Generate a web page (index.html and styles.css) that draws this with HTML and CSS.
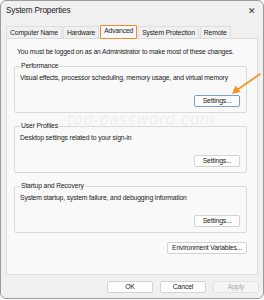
FILE: index.html
```html
<!DOCTYPE html>
<html lang="en">
<head>
    <meta charset="UTF-8">
    <title>System Properties</title>
    <link rel="stylesheet" href="styles.css">
</head>
<body>

    <!-- Dialog window -->
    <div class="window">
        <div class="titlebar">
            <span class="title">System Properties</span>
            <span class="close">&#x2715;</span>
        </div>

        <!-- Tabs -->
        <div class="tabs">
            <div class="tab">Computer Name</div>
            <div class="tab">Hardware</div>
            <div class="tab active">Advanced</div>
            <div class="tab">System Protection</div>
            <div class="tab">Remote</div>
        </div>

        <!-- Tab page -->
        <div class="panel">
            <p class="notice">You must be logged on as an Administrator to make most of these changes.</p>

            <fieldset class="group">
                <legend>Performance</legend>
                <p>Visual effects, processor scheduling, memory usage, and virtual memory</p>
                <div class="group-actions">
                    <button class="btn focused">Settings...</button>
                </div>
            </fieldset>

            <fieldset class="group">
                <legend>User Profiles</legend>
                <p>Desktop settings related to your sign-in</p>
                <div class="group-actions">
                    <button class="btn">Settings...</button>
                </div>
            </fieldset>

            <fieldset class="group">
                <legend>Startup and Recovery</legend>
                <p>System startup, system failure, and debugging information</p>
                <div class="group-actions">
                    <button class="btn">Settings...</button>
                </div>
            </fieldset>

            <div class="env-row">
                <button class="btn env">Environment Variables...</button>
            </div>

            <div class="watermark">top-password.com</div>
        </div>

        <!-- Dialog buttons -->
        <div class="footer">
            <button class="btn wide">OK</button>
            <button class="btn wide">Cancel</button>
            <button class="btn wide" disabled>Apply</button>
        </div>

        <!-- Orange pointer arrow -->
        <svg class="pointer" width="40" height="30" viewBox="0 0 40 30">
            <line x1="38" y1="4" x2="15" y2="20" stroke="#f39321" stroke-width="1.6" stroke-linecap="round"/>
            <polygon points="10,24 13.5,15.5 18.5,22" fill="#f39321"/>
        </svg>
    </div>

</body>
</html>
```

FILE: styles.css
```css
/* Reset */
body, html {
    margin: 0;
    padding: 0;
    background: #ffffff;
    font-family: 'Liberation Sans', Arial, sans-serif;
    color: #1a1a1a;
}

p {
    margin: 0;
}

/* Window frame */
.window {
    position: relative;
    width: 264px;
    height: 299px;
    box-sizing: border-box;
    border: 1px solid #9b9b9b;
    border-radius: 6px;
    background: #f0f0f0;
    overflow: hidden;
    letter-spacing: -0.15px;
}

/* Title bar */
.titlebar {
    height: 19px;
    display: flex;
    align-items: center;
    justify-content: space-between;
    padding: 0 7px 0 5px;
}

.title {
    font-size: 8.2px;
}

.close {
    font-size: 9px;
    color: #333;
}

/* Tabs */
.tabs {
    display: flex;
    margin: 6px 0 0 5px;
    height: 12px;
}

.tab {
    font-size: 6.8px;
    line-height: 11px;
    padding: 0 3px;
    border: 1px solid #dedede;
    border-bottom: none;
    background: #f0f0f0;
    color: #222;
    margin-right: 1px;
}

.tab.active {
    background: #f9f9f9;
    border: 1px solid #f08a24;
    border-radius: 1px;
    line-height: 10px;
    margin-top: -1px;
    height: 12px;
    position: relative;
    z-index: 1;
}

/* Tab page */
.panel {
    position: relative;
    margin: 0 5px 0 5px;
    height: 237px;
    box-sizing: border-box;
    border: 1px solid #dcdcdc;
    background: #f9f9f9;
    padding: 9px 10px 0 7px;
}

.notice {
    font-size: 6.8px;
    padding-left: 3px;
    margin-bottom: 7px;
    white-space: nowrap;
}

/* Group boxes */
.group {
    margin: 0 0 9px 0;
    padding: 0 6px 5px 5px;
    border: 1px solid #dadada;
    border-radius: 2px;
    height: 51px;
    box-sizing: border-box;
    display: flex;
    flex-direction: column;
}

.group legend {
    font-size: 6.8px;
    padding: 0 1px;
    line-height: 8px;
}

.group p {
    font-size: 6.8px;
    margin-top: 4px;
    white-space: nowrap;
}

.group-actions {
    margin-top: auto;
    display: flex;
    justify-content: flex-end;
}

/* Buttons */
.btn {
    font-family: 'Liberation Sans', Arial, sans-serif;
    font-size: 6.8px;
    letter-spacing: -0.15px;
    height: 12px;
    padding: 0;
    width: 46px;
    background: #fdfdfd;
    border: 1px solid #d3d3d3;
    border-radius: 2px;
    color: #1a1a1a;
    line-height: 10px;
}

.btn.focused {
    border-color: #7a9fd0;
}

.btn.env {
    width: 80px;
}

.btn.wide {
    width: 46px;
}

.btn:disabled {
    background: #f5f5f5;
    border-color: #e3e3e3;
    color: #a8a8a8;
}

.env-row {
    display: flex;
    justify-content: flex-end;
    margin-top: 3px;
}

/* Watermark text */
.watermark {
    position: absolute;
    left: 60px;
    top: 72px;
    font-family: 'DejaVu Sans', sans-serif;
    font-size: 15px;
    font-style: italic;
    color: #efefef;
    letter-spacing: 0.6px;
    pointer-events: none;
}

/* Footer buttons */
.footer {
    display: flex;
    justify-content: flex-end;
    gap: 7px;
    padding: 6px 4px 0 0;
}

/* Arrow pointing at the Settings button */
.pointer {
    position: absolute;
    left: 221px;
    top: 69px;
}
```
